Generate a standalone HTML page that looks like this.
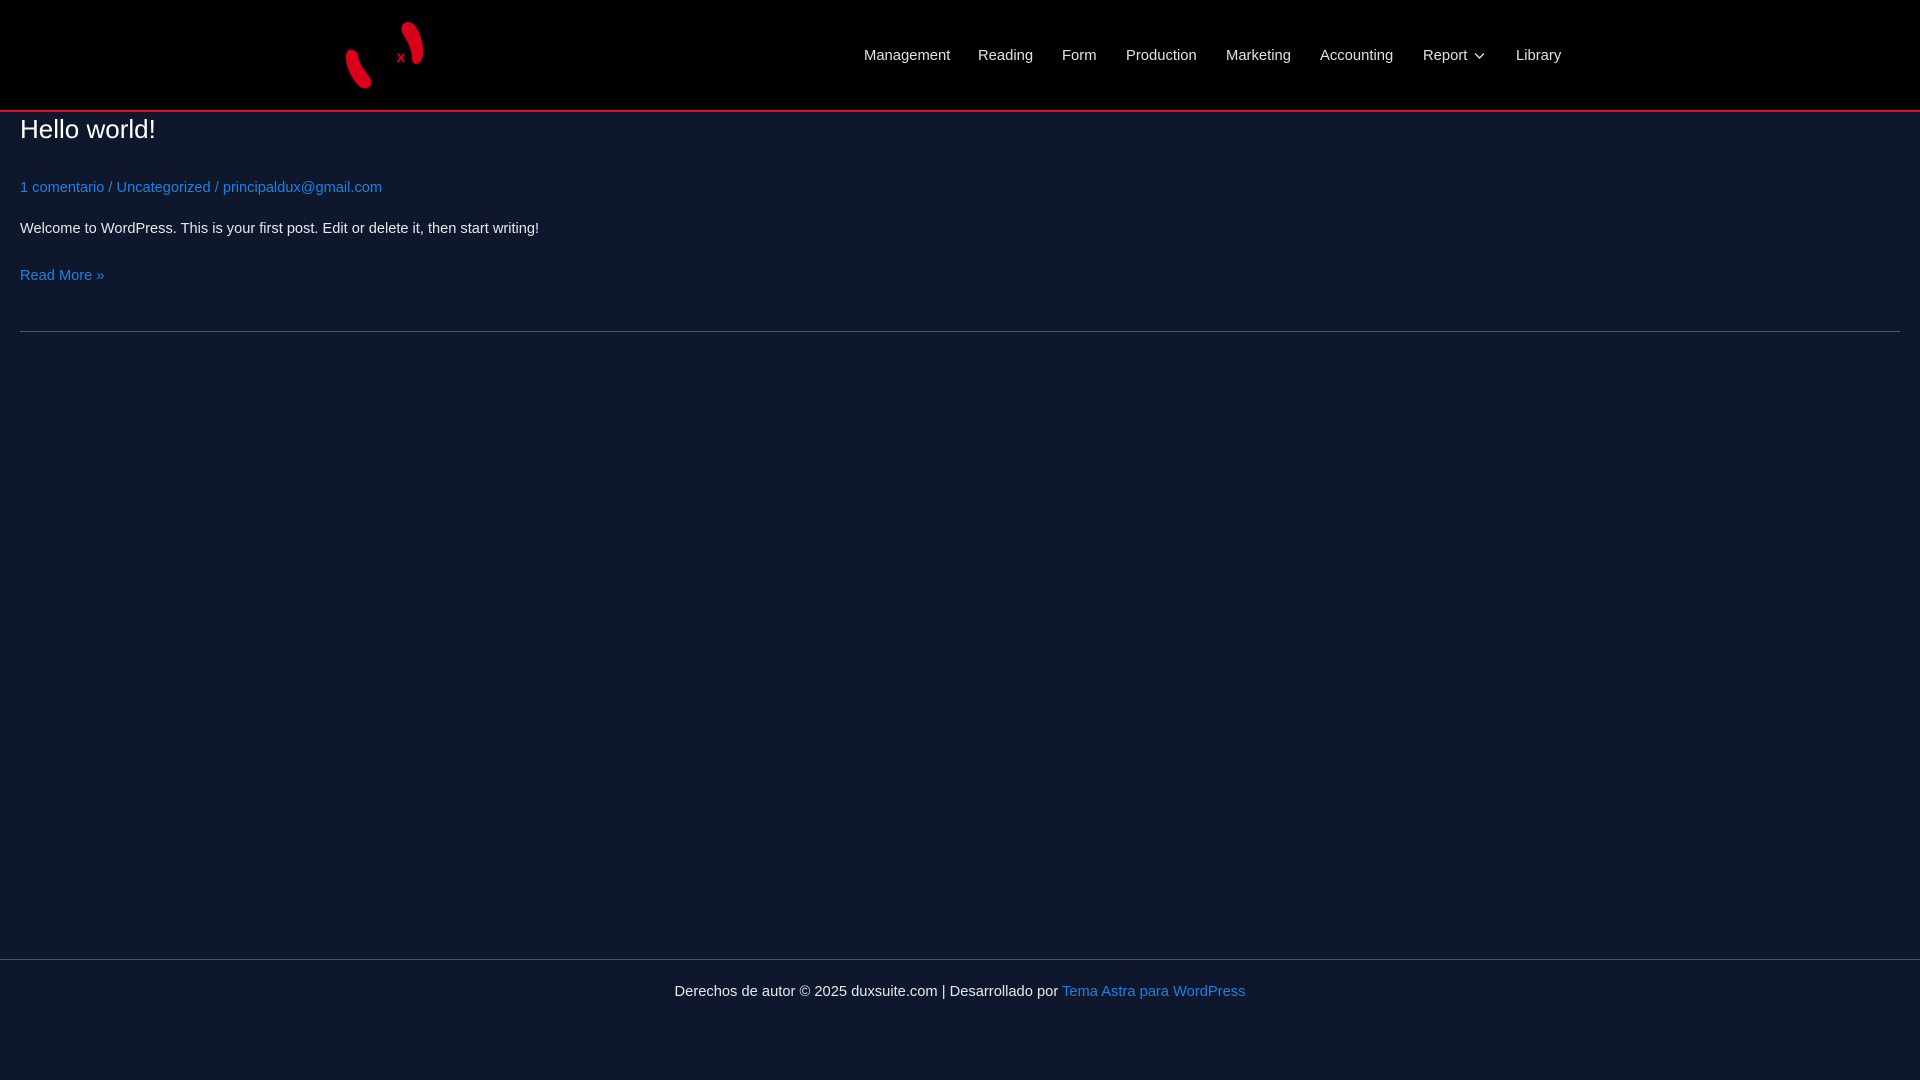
<!DOCTYPE html>
<html><head><meta charset="utf-8"><style>
*{margin:0;padding:0;box-sizing:border-box}
body{width:1920px;height:1080px;background:#0e172b;font-family:"Liberation Sans",Arial,sans-serif;position:relative;overflow:hidden;color:#e5e7eb}
.hdr{position:absolute;left:0;top:0;width:1920px;height:112px;background:#000;border-bottom:2px solid #e01020}
.nav a{position:absolute;top:48px;font-size:14.8px;color:#e0e0e0;text-decoration:none;white-space:nowrap}
.t{position:absolute;white-space:nowrap}
a.b{color:#1a82e6;text-decoration:none}
</style></head><body>
<div class="hdr">
<svg style="position:absolute;left:343px;top:18px" width="90" height="75" viewBox="0 0 90 75">
<path d="M10 32 C4 30 2 36 3 42 C4 52 10 62 16 68 C22 73 30 70 28 62 C26 56 18 50 16 42 C15 35 14 33 10 32Z" fill="#d9001b"/>
<path d="M65 4 C59 4 57 10 60 16 C65 24 69 32 69 40 C69 46 74 48 78 43 C82 36 80 24 76 14 C73 8 70 4 65 4Z" fill="#d9001b"/>
<text x="58" y="44" font-family="Liberation Sans,sans-serif" font-weight="bold" font-size="16" fill="#d9001b" text-anchor="middle">x</text>
</svg>
<div class="nav">
<a style="left:864px">Management</a>
<a style="left:978px">Reading</a>
<a style="left:1062px">Form</a>
<a style="left:1126px">Production</a>
<a style="left:1226px">Marketing</a>
<a style="left:1320px">Accounting</a>
<a style="left:1423px">Report</a>
<svg style="position:absolute;left:1474px;top:52px" width="11" height="8" viewBox="0 0 11 8"><path d="M1 1.5 L5.5 6 L10 1.5" fill="none" stroke="#e0e0e0" stroke-width="1.4"/></svg>
<a style="left:1516px">Library</a>
</div>
</div>
<div class="t" style="left:20px;top:114px;font-size:26px;color:#fff">Hello world!</div>
<div class="t" style="left:20px;top:180px;font-size:14.6px;color:#1a82e6"><a class="b">1 comentario</a> / <a class="b">Uncategorized</a> / <a class="b">principaldux@gmail.com</a></div>
<div class="t" style="left:20px;top:221px;font-size:14.6px;color:#e5e7eb">Welcome to WordPress. This is your first post. Edit or delete it, then start writing!</div>
<div class="t" style="left:20px;top:268px;font-size:14.6px"><a class="b">Read More »</a></div>
<div style="position:absolute;left:20px;top:331px;width:1880px;height:1px;background:#4b5563"></div>
<div style="position:absolute;left:0;top:959px;width:1920px;height:1px;background:#4b5563"></div>
<div class="t" style="left:0;width:1920px;text-align:center;top:984px;font-size:14.7px;color:#e5e7eb">Derechos de autor © 2025 duxsuite.com | Desarrollado por <a class="b">Tema Astra para WordPress</a></div>
</body></html>
